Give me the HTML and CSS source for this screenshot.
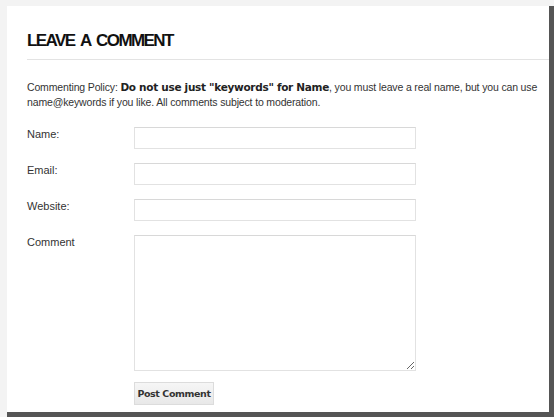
FILE: index.html
```html
<!DOCTYPE html>
<html lang="en">
<head>
  <meta charset="UTF-8" />
  <title>Leave a Comment</title>
  <link rel="stylesheet" href="styles.css">
</head>
<body>
  <div class="window">
    <section class="comments">
      <h2 class="title">LEAVE A COMMENT</h2>
      <p class="policy">Commenting Policy: <strong>Do not use just "keywords" for Name</strong>, you must leave a real name, but you can use<br>name@keywords if you like. All comments subject to moderation.</p>

      <form class="comment-form">
        <div class="row">
          <label for="name">Name:</label>
          <input type="text" id="name" />
        </div>
        <div class="row">
          <label for="email">Email:</label>
          <input type="text" id="email" />
        </div>
        <div class="row">
          <label for="url">Website:</label>
          <input type="text" id="url" />
        </div>
        <div class="row">
          <label for="comment">Comment</label>
          <textarea id="comment"></textarea>
        </div>
        <div class="row">
          <span class="spacer"></span>
          <button type="button" class="submit">Post Comment</button>
        </div>
      </form>
    </section>
  </div>
</body>
</html>
```

FILE: styles.css
```css
* {
  box-sizing: border-box;
}

body {
  margin: 0;
  background-color: #f3f3f3;
  font-family: 'Liberation Sans', Arial, sans-serif;
  color: #333;
}

.window {
  margin: 6px 0 0 7px;
  width: 547px;
  height: 411px;
  background-color: #fff;
  border-right: 5px solid #555;
  border-bottom: 5px solid #555;
}

.comments {
  padding: 25px 0 0 20px;
}

.title {
  margin: 0;
  padding-bottom: 8px;
  border-bottom: 1px solid #e3e3e3;
  font-size: 17px;
  letter-spacing: -1.6px;
  word-spacing: 3px;
  line-height: 20px;
  color: #111;
}

.policy {
  margin: 20px 0 0 0;
  font-size: 10.5px;
  line-height: 15px;
  letter-spacing: -0.15px;
  white-space: nowrap;
  color: #333;
}

.policy strong {
  font-family: 'DejaVu Sans', Verdana, sans-serif;
  font-size: 10.5px;
  letter-spacing: -0.3px;
  color: #222;
}

.comment-form {
  display: flex;
  flex-direction: column;
  gap: 14px;
  margin-top: 17px;
}

.row {
  display: flex;
  align-items: flex-start;
}

.row label,
.spacer {
  width: 107px;
  flex-shrink: 0;
  font-size: 11px;
  padding-top: 1px;
}

input,
textarea {
  width: 282px;
  height: 22px;
  margin: 0;
  border: 1px solid #e2e2e2;
  border-top-color: #d8d8d8;
  background-color: #fff;
  font-family: inherit;
}

textarea {
  height: 136px;
  resize: vertical;
}

.submit {
  margin: -3px 0 0;
  padding: 0;
  height: 23px;
  width: 80px;
  white-space: nowrap;
  background: linear-gradient(#f6f6f6, #e8e8e8);
  border: 1px solid #dcdcdc;
  font-family: 'DejaVu Sans', Verdana, sans-serif;
  font-weight: bold;
  font-size: 9.5px;
  letter-spacing: -0.4px;
  color: #333;
}
```
